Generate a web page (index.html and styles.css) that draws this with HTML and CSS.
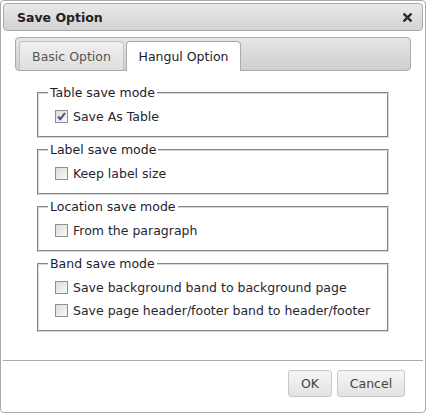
FILE: index.html
```html
<!DOCTYPE html>
<html>
<head>
<meta charset="utf-8">
<link rel="stylesheet" href="styles.css">
</head>
<body>
<div class="dialog">
  <div class="titlebar">
    <span class="title">Save Option</span>
    <svg class="close" width="10" height="10" viewBox="0 0 10 10"><path d="M1.5 1.5 L8.5 8.5 M8.5 1.5 L1.5 8.5" stroke="#2a2a2a" stroke-width="2.6" stroke-linecap="square"/></svg>
  </div>
  <div class="body">
    <div class="tabs">
      <div class="tab-nav">
        <div class="tab">Basic Option</div>
        <div class="tab active">Hangul Option</div>
      </div>
      <div class="panel">
        <fieldset class="group">
          <legend>Table save mode</legend>
          <label class="row"><span class="box checked"><svg width="11" height="11" viewBox="0 0 11 11"><path d="M2 5.5 L4.3 8.2 L9 2" fill="none" stroke="#3f4f96" stroke-width="2"/></svg></span>Save As Table</label>
        </fieldset>
        <fieldset class="group">
          <legend>Label save mode</legend>
          <label class="row"><span class="box"></span>Keep label size</label>
        </fieldset>
        <fieldset class="group">
          <legend>Location save mode</legend>
          <label class="row"><span class="box"></span>From the paragraph</label>
        </fieldset>
        <fieldset class="group">
          <legend>Band save mode</legend>
          <label class="row"><span class="box"></span>Save background band to background page</label>
          <label class="row"><span class="box"></span>Save page header/footer band to header/footer</label>
        </fieldset>
      </div>
    </div>
  </div>
  <div class="footer">
    <button class="btn">OK</button>
    <button class="btn">Cancel</button>
  </div>
</div>
</body>
</html>
```

FILE: styles.css
```css
html, body {
  margin: 0;
  padding: 0;
  background: #fff;
}
body {
  font-family: "DejaVu Sans", Verdana, sans-serif;
  font-size: 12.5px;
  color: #222;
}
.dialog {
  box-sizing: border-box;
  width: 426px;
  height: 413px;
  border: 1px solid #aaa;
  border-radius: 4px;
  padding: 2px;
  display: flex;
  flex-direction: column;
}
.titlebar {
  box-sizing: border-box;
  height: 28px;
  border: 1px solid #aaa;
  border-radius: 4px;
  background: linear-gradient(#e9e9e9, #d3d3d3);
  display: flex;
  align-items: center;
  justify-content: space-between;
  padding: 0 10px 0 13px;
}
.close {
  width: 9px;
  height: 9px;
}
.title {
  font-weight: bold;
  font-size: 12.5px;
  color: #222;
}
.body {
  flex: 1;
  padding: 6px 12px 0 12px;
}
.tab-nav {
  box-sizing: border-box;
  height: 34px;
  border: 1px solid #aaa;
  border-radius: 4px;
  background: linear-gradient(#e5e5e5, #cfcfcf);
  display: flex;
  align-items: flex-end;
  gap: 2px;
  padding: 4px 0 0 3px;
}
.tab {
  box-sizing: border-box;
  height: 29px;
  border: 1px solid #c4c4c4;
  border-bottom: none;
  border-radius: 4px 4px 0 0;
  background: linear-gradient(#f0f0f0, #dedede);
  color: #555;
  display: flex;
  align-items: center;
  padding: 0 8px;
  width: 105px;
  justify-content: center;
  white-space: nowrap;
}
.tab.active {
  width: 115px;
  height: 30px;
  margin-bottom: -1px;
  border-color: #aaa;
  background: #fff;
  color: #222;
}
.panel {
  padding: 15px 22px 0 22px;
  display: flex;
  flex-direction: column;
  gap: 5px;
}
.group {
  margin: 0;
  border: 2px groove #d8d8d8;
  padding: 9px 9px 13px 16px;
  display: flex;
  flex-direction: column;
  gap: 9px;
}
.group legend {
  padding: 0 2px;
  margin-left: -7px;
  color: #1c1c2c;
  line-height: 14px;
}
.row {
  display: flex;
  align-items: center;
  gap: 5px;
  height: 14px;
  color: #262630;
}
.box {
  box-sizing: border-box;
  width: 13px;
  height: 13px;
  border: 1px solid #8e8f8f;
  background: linear-gradient(135deg, #dcdcd8, #f8f8f6);
  display: flex;
  align-items: center;
  justify-content: center;
}
.footer {
  border-top: 1px solid #aaa;
  display: flex;
  justify-content: flex-end;
  gap: 5px;
  padding: 9px 18px 13px 0;
}
.btn {
  font-family: "DejaVu Sans", Verdana, sans-serif;
  font-size: 12.5px;
  color: #444;
  height: 27px;
  border: 1px solid #c8c8c8;
  border-radius: 3px;
  background: linear-gradient(#f6f6f6, #e2e2e2);
  padding: 0 10px;
}
.btn:first-child {
  width: 44px;
}
.btn:last-child {
  width: 68px;
}
```
